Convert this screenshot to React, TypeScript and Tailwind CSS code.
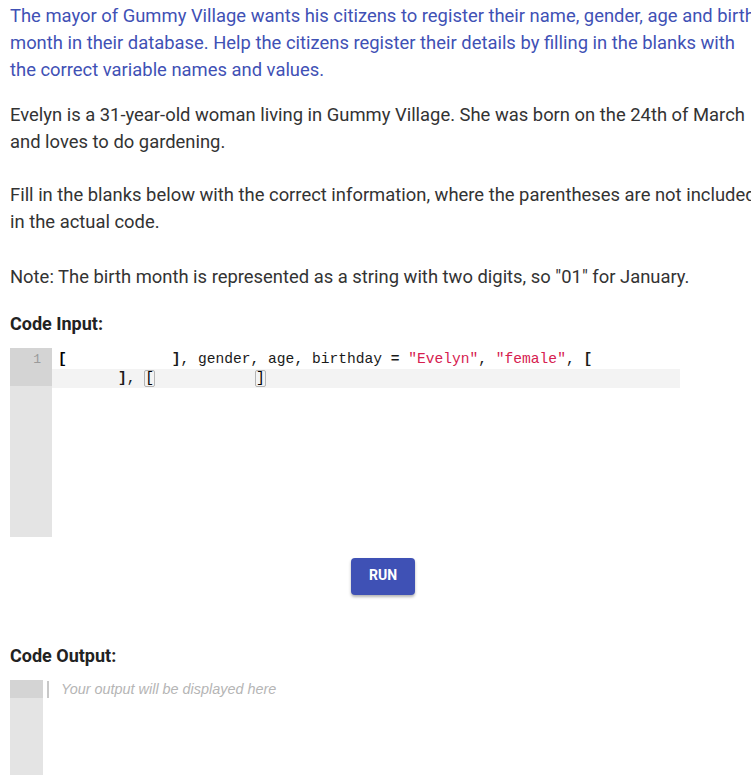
import React from 'react';

const mono = { fontFamily: '"Liberation Mono", "DejaVu Sans Mono", monospace' };

// matched-bracket box on the wrapped row
const Boxed: React.FC<{ ch: string }> = ({ ch }) => (
  <span className="inline-block border border-[#b5b5b5] rounded-[2px] leading-[15px] text-[#000]">{ch}</span>
);

const Blank: React.FC<{ w: string }> = ({ w }) => <span className={`inline-block ${w}`} />;

const CodeInput: React.FC = () => (
  <div className="flex h-[189px] w-[670px] mt-3 bg-white">
    <div className="w-[42px] bg-[#e4e4e4] shrink-0">
      <div className="h-[38px] bg-[#d4d4d4] text-right pr-[11px] pt-[2px] text-[13px] leading-[19px] text-[#9a9a9a]" style={mono}>
        1
      </div>
    </div>
    <div className="flex-1 pt-[2px] text-[14.6px] leading-[19px] text-[#1a1a1a]" style={mono}>
      <div className="h-[19px] whitespace-pre pl-[6px]">
        <span className="text-[#000] font-bold">[</span>
        <Blank w="w-[105px]" />
        <span className="font-bold">]</span>, gender, age, birthday <span className="font-bold">=</span>{' '}
        <span className="text-[#d6204f]">"Evelyn"</span>, <span className="text-[#d6204f]">"female"</span>,{' '}
        <span className="font-bold">[</span>
      </div>
      <div className="h-[19px] whitespace-pre bg-[#f3f3f3] flex items-center">
        <Blank w="w-[66px]" />
        <span className="font-bold">]</span>, <Boxed ch="[" />
        <Blank w="w-[100px]" />
        <Boxed ch="]" />
      </div>
    </div>
  </div>
);

export default function App() {
  return (
    <div className="w-[751px] h-[783px] overflow-hidden bg-white" style={{ fontFamily: 'Roboto, "Liberation Sans", sans-serif' }}>
      <div className="w-[800px] pl-[10px] pt-[2px] whitespace-nowrap">
        <p className="text-[18.4px] leading-[27px] text-[#3f51b5]">
          The mayor of Gummy Village wants his citizens to register their name, gender, age and birth
          <br />
          month in their database. Help the citizens register their details by filling in the blanks with
          <br />
          the correct variable names and values.
        </p>
        <p className="mt-[18px] text-[18.4px] leading-[27px] text-[#333]">
          Evelyn is a 31-year-old woman living in Gummy Village. She was born on the 24th of March
          <br />
          and loves to do gardening.
        </p>
        <p className="mt-[26px] text-[18.4px] leading-[27px] text-[#333]">
          Fill in the blanks below with the correct information, where the parentheses are not included
          <br />
          in the actual code.
        </p>
        <p className="mt-[28px] text-[18.4px] leading-[27px] text-[#333]">
          Note: The birth month is represented as a string with two digits, so "01" for January.
        </p>

        <h3 className="mt-[22px] text-[18px] leading-6 font-bold text-[#222]">Code Input:</h3>
        <CodeInput />

        <div className="mt-[21px] pl-[341px]">
          <button className="w-16 h-[37px] rounded bg-[#3f51b5] text-white text-sm font-bold leading-[33px] pb-[2px] shadow-[0_2px_3px_rgba(0,0,0,0.3)]">
            RUN
          </button>
        </div>

        <h3 className="mt-[49px] text-[18px] leading-6 font-bold text-[#222]">Code Output:</h3>
        <div className="mt-3 flex h-[95px]">
          <div className="w-[33px] bg-[#e4e4e4]">
            <div className="h-[18px] bg-[#d4d4d4]" />
          </div>
          <div className="ml-[4px] mt-[1px] w-[2px] h-[17px] bg-[#c8c8c8]" />
          <span
            className="ml-[12px] text-[14.4px] leading-[18px] italic text-[#b5b5b5]"
            style={{ fontFamily: '"Liberation Sans", Arial, sans-serif' }}
          >
            Your output will be displayed here
          </span>
        </div>
      </div>
    </div>
  );
}
